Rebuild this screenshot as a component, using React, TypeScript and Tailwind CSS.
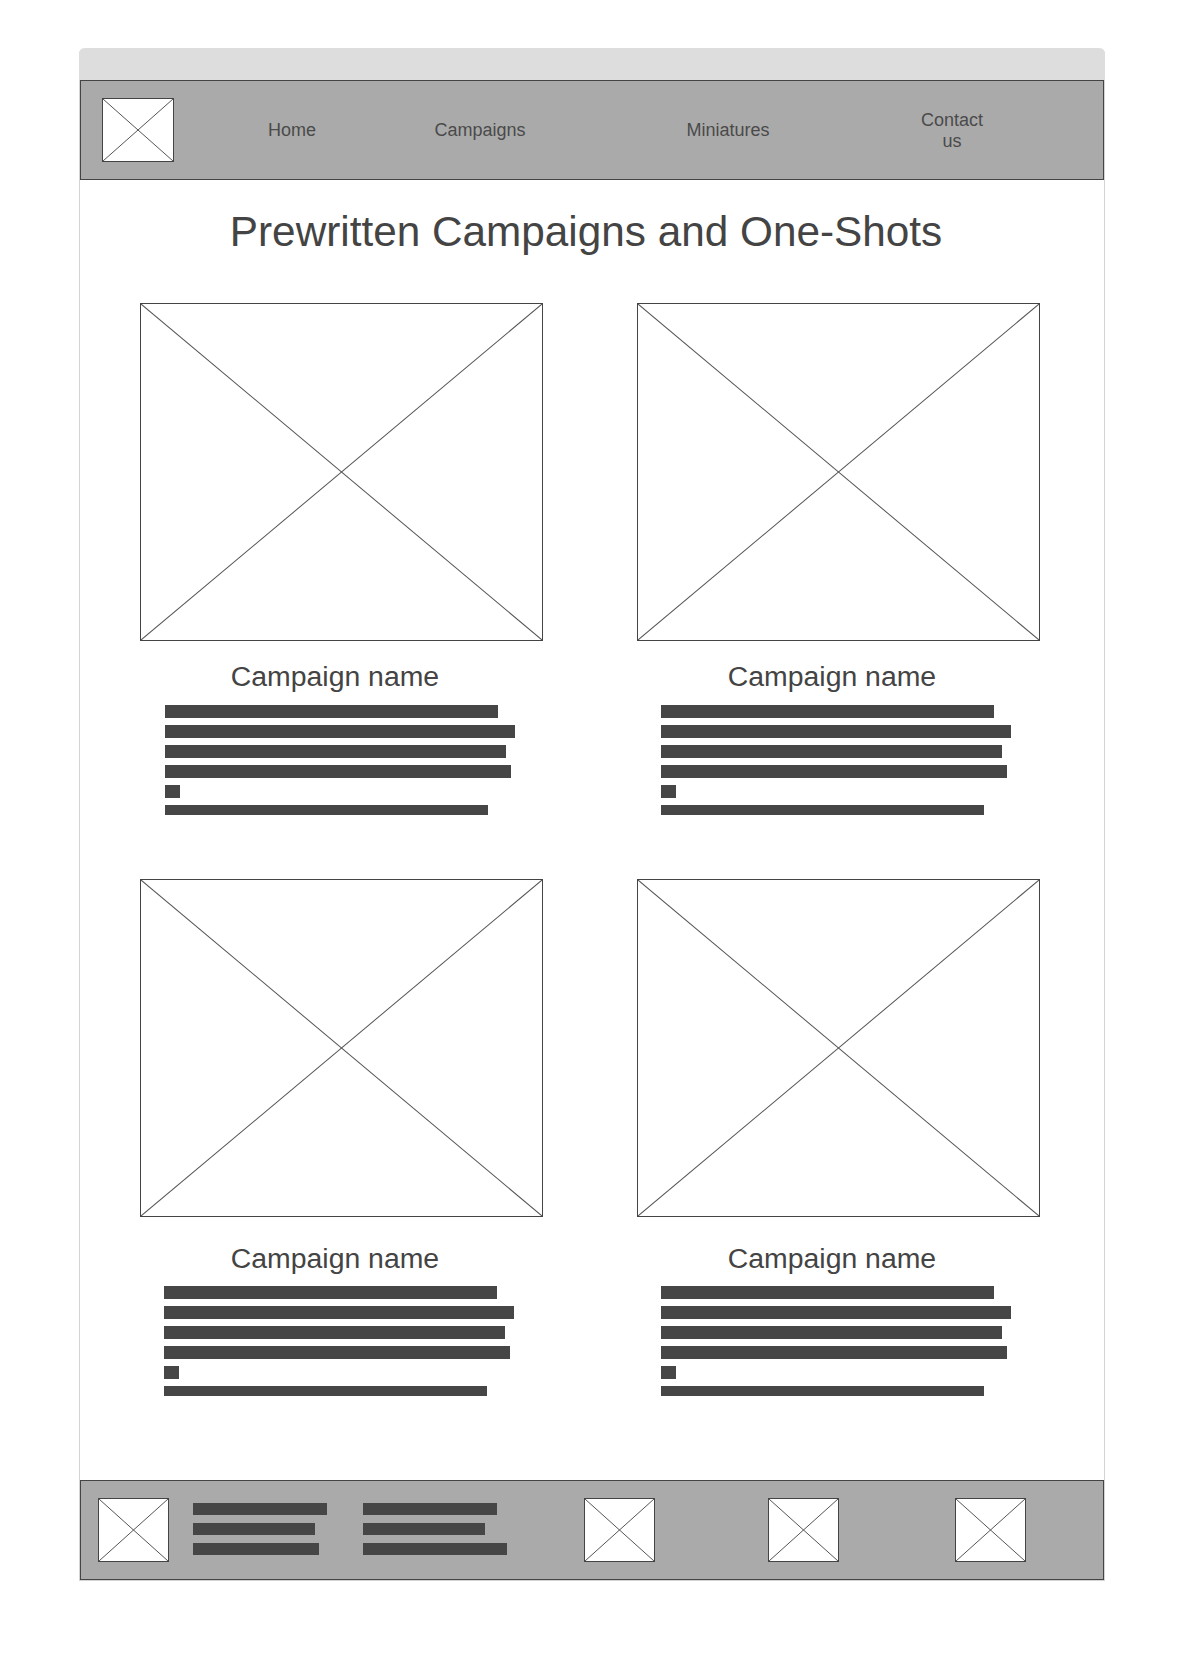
import React from "react";

const Placeholder = ({ className }: { className: string }) => (
  <div className={`relative bg-white border border-[#444444] ${className}`}>
    <svg className="absolute inset-0 w-full h-full" viewBox="0 0 100 100" preserveAspectRatio="none">
      <line x1="0" y1="0" x2="100" y2="100" stroke="#555555" strokeWidth="1" vectorEffect="non-scaling-stroke" />
      <line x1="100" y1="0" x2="0" y2="100" stroke="#555555" strokeWidth="1" vectorEffect="non-scaling-stroke" />
    </svg>
  </div>
);

const Card = ({ nameTop, barsTop, barsLeft }: { nameTop: string; barsTop: string; barsLeft: string }) => (
  <div className="flex flex-col">
    <Placeholder className="w-[403px] h-[338px]" />
    <div className={`w-[390px] text-center text-[28.4px] leading-[32px] text-[#444444] ${nameTop}`}>
      Campaign name
    </div>
    <div className={`flex flex-col gap-[7px] ${barsLeft} ${barsTop}`}>
      <div className="h-[13px] w-[333px] bg-[#464646]" />
      <div className="h-[13px] w-[350px] bg-[#464646]" />
      <div className="h-[13px] w-[341px] bg-[#464646]" />
      <div className="h-[13px] w-[346px] bg-[#464646]" />
      <div className="h-[13px] w-[15px] bg-[#464646]" />
      <div className="h-[10px] w-[323px] bg-[#464646]" />
    </div>
  </div>
);

const App = () => {
  return (
    <div className="min-h-[1660px] bg-white pt-[48px] font-['Liberation_Sans',Arial,sans-serif]">
      <div className="ml-[79px] w-[1026px] border-x border-b border-[#d4d4d4] rounded-t-md">
        <div className="h-[32px] bg-[#dddddd] rounded-t-md -mx-px" />

        <nav className="h-[100px] bg-[#aaaaaa] border border-[#444444] flex items-center text-[18px] text-[#4a4a4a]">
          <Placeholder className="ml-[21px] w-[72px] h-[64px]" />
          <div className="ml-[58px] w-[120px] text-center">Home</div>
          <div className="ml-[68px] w-[120px] text-center">Campaigns</div>
          <div className="ml-[128px] w-[120px] text-center">Miniatures</div>
          <div className="ml-[129px] w-[70px] text-center leading-[21px] pt-[2px]">Contact us</div>
        </nav>

        <h1 className="mt-[28px] h-[48px] text-center text-[42.3px] leading-[48px] text-[#444444] pr-[12px]">
          Prewritten Campaigns and One-Shots
        </h1>

        <div className="mt-[47px] pl-[60px] grid grid-cols-[403px_403px] gap-x-[94px] gap-y-[64px]">
          <Card nameTop="mt-[19px]" barsTop="mt-[13px]" barsLeft="pl-[25px]" />
          <Card nameTop="mt-[19px]" barsTop="mt-[13px]" barsLeft="pl-[24px]" />
          <Card nameTop="mt-[25px]" barsTop="mt-[12px]" barsLeft="pl-[24px]" />
          <Card nameTop="mt-[25px]" barsTop="mt-[12px]" barsLeft="pl-[24px]" />
        </div>

        <footer className="mt-[84px] h-[100px] bg-[#aaaaaa] border border-[#444444] flex items-start pt-[17px]">
          <Placeholder className="ml-[17px] w-[71px] h-[64px]" />
          <div className="ml-[24px] mt-[5px] flex flex-col gap-[8px]">
            <div className="h-[12px] w-[134px] bg-[#464646]" />
            <div className="h-[12px] w-[122px] bg-[#464646]" />
            <div className="h-[12px] w-[126px] bg-[#464646]" />
          </div>
          <div className="ml-[36px] mt-[5px] flex flex-col gap-[8px]">
            <div className="h-[12px] w-[134px] bg-[#464646]" />
            <div className="h-[12px] w-[122px] bg-[#464646]" />
            <div className="h-[12px] w-[144px] bg-[#464646]" />
          </div>
          <Placeholder className="ml-[77px] w-[71px] h-[64px]" />
          <Placeholder className="ml-[113px] w-[71px] h-[64px]" />
          <Placeholder className="ml-[116px] w-[71px] h-[64px]" />
        </footer>
      </div>
    </div>
  );
};

export default App;
